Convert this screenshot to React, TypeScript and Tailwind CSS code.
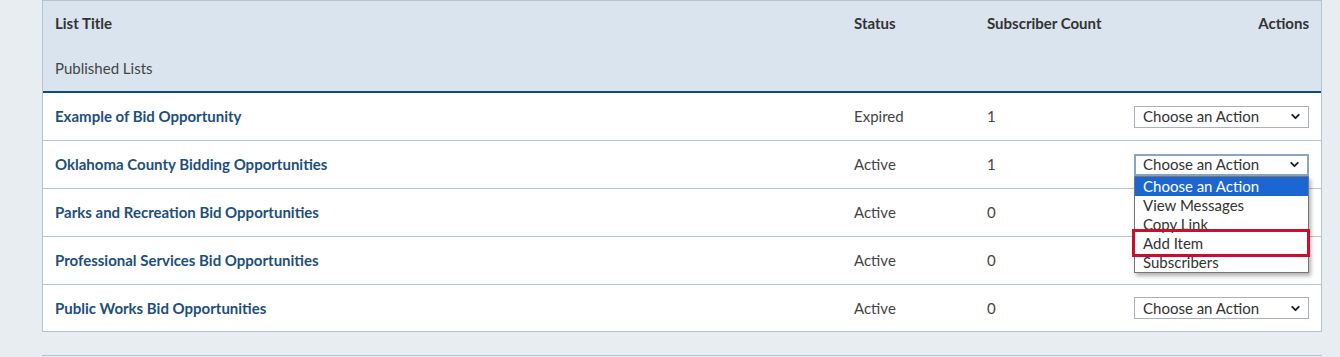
import { ChevronDown } from 'lucide-react';

type Row = { title: string; status: string; count: number; open?: boolean };

const rows: Row[] = [
  { title: 'Example of Bid Opportunity', status: 'Expired', count: 1 },
  { title: 'Oklahoma County Bidding Opportunities', status: 'Active', count: 1, open: true },
  { title: 'Parks and Recreation Bid Opportunities', status: 'Active', count: 0 },
  { title: 'Professional Services Bid Opportunities', status: 'Active', count: 0 },
  { title: 'Public Works Bid Opportunities', status: 'Active', count: 0 },
];

const options = ['Choose an Action', 'View Messages', 'Copy Link', 'Add Item', 'Subscribers'];

function ActionSelect({ open }: { open?: boolean }) {
  return (
    <div className="relative w-[175px]">
      <div
        className={`flex h-[22px] items-center justify-between bg-white pr-[6px] text-[15px] text-[#333] ${
          open ? 'border-2 border-[#8aa4c2] pl-[7px]' : 'border border-[#a9b1ba] pl-[8px]'
        }`}
      >
        <span>Choose an Action</span>
        <ChevronDown className="h-[13px] w-[13px] text-[#222]" strokeWidth={3.5} />
      </div>

      {open && (
        <div className="absolute left-0 top-[22px] z-10 w-[175px] border border-[#767676] bg-white shadow-[2px_3px_4px_rgba(0,0,0,0.3)]">
          {options.map((o, i) => (
            <div
              key={o}
              className={`h-[19px] pl-[8px] text-[15px] leading-[19px] ${
                i === 0 ? 'bg-[#1b66d1] text-white' : 'text-[#333]'
              }`}
            >
              {o}
            </div>
          ))}
          {/* highlight around "Add Item" */}
          <div className="pointer-events-none absolute left-[-3px] top-[52px] h-[28px] w-[178px] border-[3px] border-[#c8102e]" />
        </div>
      )}
    </div>
  );
}

export default function App() {
  return (
    <div className="min-h-[357px] bg-[#e8edf2] pl-[42px] pr-[18px] font-['Lato','Liberation_Sans',sans-serif]">
      <div className="border border-[#b3c3d6] bg-white">
        {/* Header */}
        <div className="border-b-2 border-[#0d4e82] bg-[#dae4ef] px-[12px]">
          <div className="grid h-[45px] grid-cols-[1fr_133px_147px_175px] items-center text-[15px] font-bold text-[#333]">
            <div>List Title</div>
            <div>Status</div>
            <div>Subscriber Count</div>
            <div className="text-right">Actions</div>
          </div>
          <div className="flex h-[45px] items-center text-[15px] text-[#444]">Published Lists</div>
        </div>

        {/* Rows */}
        {rows.map((r, i) => {
          const last = i === rows.length - 1;
          return (
            <div
              key={r.title}
              className={`grid grid-cols-[1fr_133px_147px_175px] items-center px-[12px] text-[15px] ${
                last ? 'h-[46px]' : 'h-[48px] border-b border-[#b8c5d3]'
              }`}
            >
              <div className="font-bold text-[#1d4f7b]">{r.title}</div>
              <div className="text-[#444]">{r.status}</div>
              <div className="text-[#444]">{r.count}</div>
              <div className="flex justify-end">
                <ActionSelect open={r.open} />
              </div>
            </div>
          );
        })}
      </div>

      <div className="mt-[23px] border-t border-[#b3c3d6]" />
    </div>
  );
}
